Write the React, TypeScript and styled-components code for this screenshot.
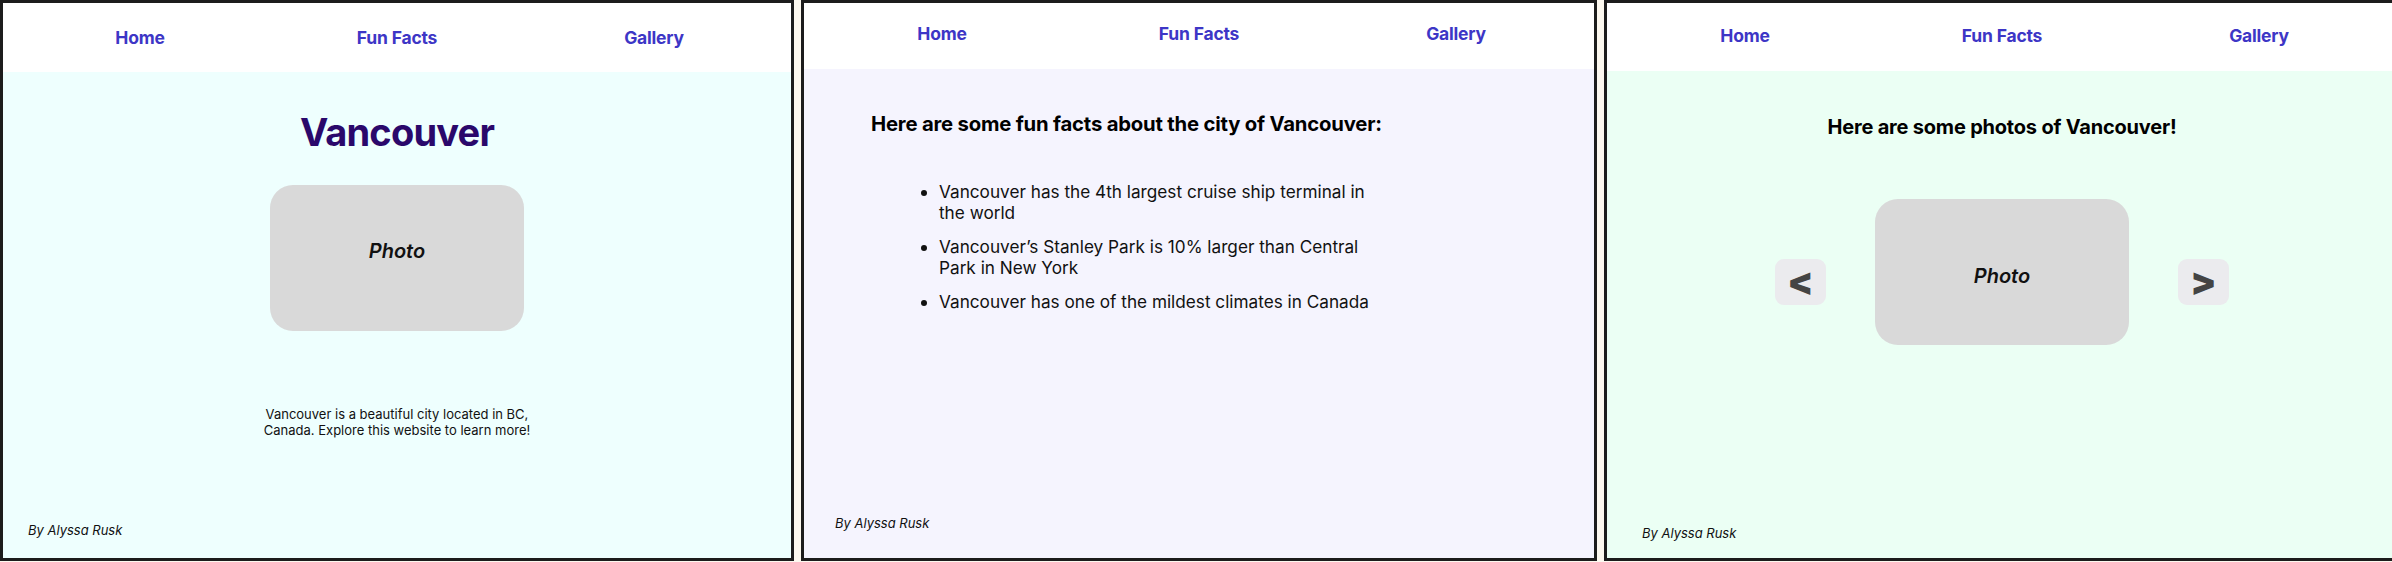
import React from "react";
import styled, { createGlobalStyle } from "styled-components";

const GlobalStyle = createGlobalStyle`
  html, body {
    margin: 0;
    padding: 0;
    background: #fcf8ef;
    overflow: hidden;
  }
  body {
    font-family: Inter, "Noto Sans", "Liberation Sans", sans-serif;
    color: #000;
  }
  * { box-sizing: border-box; }
`;

const Row = styled.div`
  display: flex;
  gap: 7px;
  width: 2392px;
  height: 562px;
  overflow: hidden;
`;

const Panel = styled.section<{ $width: number }>`
  flex: 0 0 ${(p) => p.$width}px;
  height: 561px;
  border: 3px solid #1c1c1c;
  display: flex;
  flex-direction: column;
  background: #fff;
`;

const Header = styled.nav<{ $height: number; $lift: number }>`
  height: ${(p) => p.$height}px;
  flex: 0 0 auto;
  background: #fff;
  display: grid;
  grid-template-columns: repeat(3, 257px);
  justify-content: center;
  align-items: center;
  padding-bottom: ${(p) => p.$lift * 2}px;
`;

const NavLink = styled.a`
  text-align: center;
  font-size: 17.5px;
  font-weight: 700;
  color: #3d36c6;
  text-decoration: none;
  letter-spacing: -0.2px;
`;

const Body = styled.main<{ $bg: string; $top: number; $bottom: number }>`
  flex: 1;
  background: ${(p) => p.$bg};
  display: flex;
  flex-direction: column;
  padding-top: ${(p) => p.$top}px;
  padding-bottom: ${(p) => p.$bottom}px;
`;

const Title = styled.h1`
  margin: 0;
  text-align: center;
  font-size: 38px;
  line-height: 46px;
  font-weight: 700;
  color: #2a086b;
  letter-spacing: -0.8px;
`;

const PhotoBox = styled.div<{ $mt: number; $shift: number }>`
  width: 254px;
  height: 146px;
  margin-top: ${(p) => p.$mt}px;
  border-radius: 23px;
  background: #d9d9d9;
  display: flex;
  align-items: center;
  justify-content: center;
  padding-top: ${(p) => Math.max(0, p.$shift * 2)}px;
  padding-bottom: ${(p) => Math.max(0, -p.$shift * 2)}px;
  font-size: 20px;
  font-weight: 600;
  font-style: italic;
  color: #111;
  flex: 0 0 auto;
`;

const Centered = styled.div`
  display: flex;
  justify-content: center;
`;

const Blurb = styled.p`
  margin: 75px 0 0;
  text-align: center;
  font-size: 13px;
  line-height: 16px;
  color: #111;
`;

const Byline = styled.footer<{ $left: number }>`
  margin-top: auto;
  padding-left: ${(p) => p.$left}px;
  font-size: 13px;
  line-height: 16px;
  font-style: italic;
  color: #111;
`;

const Heading = styled.h2<{ $size: number; $center?: boolean }>`
  margin: 0;
  font-size: ${(p) => p.$size}px;
  line-height: 24px;
  font-weight: 700;
  letter-spacing: -0.2px;
  text-align: ${(p) => (p.$center ? "center" : "left")};
  color: #000;
`;

const FactsWrap = styled.div`
  padding-left: 67px;
`;

const FactList = styled.ul`
  margin: 45px 0 0;
  padding-left: 68px;
  width: 515px;
  list-style: disc;
`;

const Fact = styled.li`
  font-size: 17.2px;
  line-height: 21px;
  color: #111;
  margin-bottom: 13px;
  padding-left: 0;
`;

const Carousel = styled.div`
  display: flex;
  justify-content: center;
  align-items: flex-start;
  gap: 49px;
  margin-top: 60px;
`;

const ArrowButton = styled.button`
  width: 51px;
  height: 46px;
  margin-top: 60px;
  border: none;
  border-radius: 9px;
  background: #ebebee;
  color: #444;
  font-family: Inter, "Liberation Sans", sans-serif;
  font-size: 38px;
  font-weight: 900;
  line-height: 46px;
  padding: 0 0 2px;
  display: flex;
  align-items: center;
  justify-content: center;
`;

const Nav = () => (
  <>
    <NavLink href="#">Home</NavLink>
    <NavLink href="#">Fun Facts</NavLink>
    <NavLink href="#">Gallery</NavLink>
  </>
);

export default function App() {
  return (
    <>
      <GlobalStyle />
      <Row>
        <Panel $width={794}>
          <Header $height={69} $lift={0}>
            <Nav />
          </Header>
          <Body $bg="#eefffe" $top={37} $bottom={20}>
            <Title>Vancouver</Title>
            <Centered>
              <PhotoBox $mt={30} $shift={-7}>Photo</PhotoBox>
            </Centered>
            <Blurb>
              Vancouver is a beautiful city located in BC,
              <br />
              Canada. Explore this website to learn more!
            </Blurb>
            <Byline $left={25}>By Alyssa Rusk</Byline>
          </Body>
        </Panel>

        <Panel $width={796}>
          <Header $height={66} $lift={3}>
            <Nav />
          </Header>
          <Body $bg="#f5f4fe" $top={43} $bottom={27}>
            <FactsWrap>
              <Heading $size={20.3}>
                Here are some fun facts about the city of Vancouver:
              </Heading>
              <FactList>
                <Fact>
                  Vancouver has the 4th largest cruise ship terminal in the world
                </Fact>
                <Fact>
                  Vancouver’s Stanley Park is 10% larger than Central Park in
                  New York
                </Fact>
                <Fact>Vancouver has one of the mildest climates in Canada</Fact>
              </FactList>
            </FactsWrap>
            <Byline $left={31}>By Alyssa Rusk</Byline>
          </Body>
        </Panel>

        <Panel $width={796}>
          <Header $height={68} $lift={2}>
            <Nav />
          </Header>
          <Body $bg="#ebfff4" $top={44} $bottom={17}>
            <Heading $size={20} $center>
              Here are some photos of Vancouver!
            </Heading>
            <Carousel>
              <ArrowButton aria-label="Previous">&lt;</ArrowButton>
              <PhotoBox $mt={0} $shift={4}>Photo</PhotoBox>
              <ArrowButton aria-label="Next">&gt;</ArrowButton>
            </Carousel>
            <Byline $left={35}>By Alyssa Rusk</Byline>
          </Body>
        </Panel>
      </Row>
    </>
  );
}
